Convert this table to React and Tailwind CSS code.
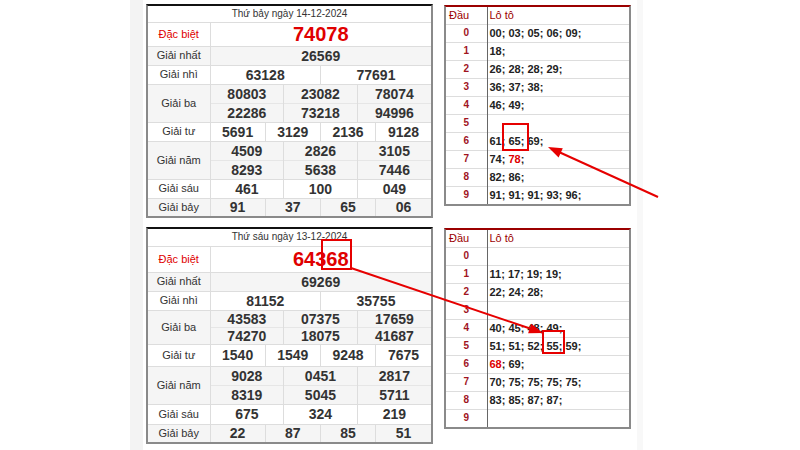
import React from "react";

// dữ liệu hai ngày quay
const days = [
  {
    date: "Thứ bảy ngày 14-12-2024",
    db: "74078",
    nhat: "26569",
    nhi: ["63128", "77691"],
    ba: [
      ["80803", "23082", "78074"],
      ["22286", "73218", "94996"],
    ],
    tu: ["5691", "3129", "2136", "9128"],
    nam: [
      ["4509", "2826", "3105"],
      ["8293", "5638", "7446"],
    ],
    sau: ["461", "100", "049"],
    bay: ["91", "37", "65", "06"],
    h: { head: 16, db: 24, nhat: 19, nhi: 19, ba: 19, tu: 19, nam: 19, sau: 19, bay: 18 },
    loto: [
      ["00", "03", "05", "06", "09"],
      ["18"],
      ["26", "28", "28", "29"],
      ["36", "37", "38"],
      ["46", "49"],
      [],
      ["61", "65", "69"],
      ["74", "78!"],
      ["82", "86"],
      ["91", "91", "91", "93", "96"],
    ],
  },
  {
    date: "Thứ sáu ngày 13-12-2024",
    db: "64368",
    nhat: "69269",
    nhi: ["81152", "35755"],
    ba: [
      ["43583", "07375", "17659"],
      ["74270", "18075", "41687"],
    ],
    tu: ["1540", "1549", "9248", "7675"],
    nam: [
      ["9028", "0451", "2817"],
      ["8319", "5045", "5711"],
    ],
    sau: ["675", "324", "219"],
    bay: ["22", "87", "85", "51"],
    h: { head: 17, db: 26, nhat: 19, nhi: 19, ba: 17, tu: 22, nam: 19, sau: 20, bay: 18 },
    loto: [
      [],
      ["11", "17", "19", "19"],
      ["22", "24", "28"],
      [],
      ["40", "45", "48", "49"],
      ["51", "51", "52", "55", "59"],
      ["68!", "69"],
      ["70", "75", "75", "75", "75"],
      ["83", "85", "87", "87"],
      [],
    ],
  },
];

const label = "p-0 leading-none text-[11px] text-[#333] text-center align-middle";
const num = "p-0 leading-none text-[14px] font-bold text-[#333] text-center align-middle border-l border-[#ddd]";
const span = { 2: 6, 3: 4, 4: 3 };

const Cells = ({ items }) =>
  items.map((n, i) => (
    <td key={i} colSpan={span[items.length]} className={num}>
      {n}
    </td>
  ));

const KetQua = ({ d }) => {
  const h = d.h;
  const gray = "bg-[#f5f5f5]";
  return (
    <div className="w-[287px] border-2 border-[#8a8a8a] border-t-[#111] bg-white">
      <table className="w-full table-fixed border-collapse">
        <colgroup>
          <col className="w-[62px]" />
          {Array.from({ length: 12 }).map((_, i) => (
            <col key={i} />
          ))}
        </colgroup>
        <tbody>
          <tr className="border-b border-[#ddd]" style={{ height: h.head }}>
            <td colSpan={13} className="p-0 leading-none text-[10px] text-[#333] text-center align-middle">
              {d.date}
            </td>
          </tr>
          <tr className="border-b border-[#ddd]" style={{ height: h.db }}>
            <td className="p-0 leading-none text-[11px] text-[#e00000] text-center align-middle">Đặc biệt</td>
            <td colSpan={12} className="p-0 text-[20px] font-bold text-[#e00000] text-center align-middle border-l border-[#ddd] leading-none">
              {d.db}
            </td>
          </tr>
          <tr className={`border-b border-[#ddd] ${gray}`} style={{ height: h.nhat }}>
            <td className={label}>Giải nhất</td>
            <td colSpan={12} className={num}>{d.nhat}</td>
          </tr>
          <tr className="border-b border-[#ddd]" style={{ height: h.nhi }}>
            <td className={label}>Giải nhì</td>
            <Cells items={d.nhi} />
          </tr>
          <tr className={`border-b border-[#e6e6e6] ${gray}`} style={{ height: h.ba }}>
            <td rowSpan={2} className={label}>Giải ba</td>
            <Cells items={d.ba[0]} />
          </tr>
          <tr className={`border-b border-[#ddd] ${gray}`} style={{ height: h.ba }}>
            <Cells items={d.ba[1]} />
          </tr>
          <tr className="border-b border-[#ddd]" style={{ height: h.tu }}>
            <td className={label}>Giải tư</td>
            <Cells items={d.tu} />
          </tr>
          <tr className={`border-b border-[#e6e6e6] ${gray}`} style={{ height: h.nam }}>
            <td rowSpan={2} className={label}>Giải năm</td>
            <Cells items={d.nam[0]} />
          </tr>
          <tr className={`border-b border-[#ddd] ${gray}`} style={{ height: h.nam }}>
            <Cells items={d.nam[1]} />
          </tr>
          <tr className="border-b border-[#ddd]" style={{ height: h.sau }}>
            <td className={label}>Giải sáu</td>
            <Cells items={d.sau} />
          </tr>
          <tr className={gray} style={{ height: h.bay }}>
            <td className={label}>Giải bảy</td>
            <Cells items={d.bay} />
          </tr>
        </tbody>
      </table>
    </div>
  );
};

const LoTo = ({ rows, head }) => (
  <div className="w-[187px] border-2 border-[#8a8a8a] border-t-[#9b0000] bg-white">
    <table className="w-full table-fixed border-collapse">
      <colgroup>
        <col className="w-[41px]" />
        <col />
      </colgroup>
      <tbody>
        <tr className="border-b border-[#ddd]" style={{ height: head }}>
          <td className="p-0 leading-none pl-[3px] text-[11px] text-[#9b0000] align-middle">Đầu</td>
          <td className="p-0 leading-none pl-[2px] text-[11px] text-[#9b0000] align-middle border-l border-[#666]">Lô tô</td>
        </tr>
        {rows.map((nums, i) => (
          <tr key={i} className={`h-[18px] ${i < 9 ? "border-b border-[#ddd]" : ""}`}>
            <td className="p-0 leading-none text-center text-[10px] font-bold text-[#a0141e] align-middle">{i}</td>
            <td className="p-0 leading-none pl-[2px] text-[11px] font-bold text-[#222] align-middle border-l border-[#666] whitespace-nowrap">
              {nums.map((n, j) => {
                const red = n.endsWith("!");
                return (
                  <React.Fragment key={j}>
                    <span className={red ? "text-[#e00000]" : ""}>{n.replace("!", "")}</span>
                    {j < nums.length - 1 ? "; " : ";"}
                  </React.Fragment>
                );
              })}
            </td>
          </tr>
        ))}
      </tbody>
    </table>
  </div>
);

export default function App() {
  return (
    <div className="relative w-[800px] h-[450px] overflow-hidden bg-white font-['Liberation_Sans',Arial,sans-serif]">
      <div className="ml-[130px] w-max h-full border-l-[13px] border-r-[6px] border-l-[#f3f3f3] border-r-[#f8f8f8] pl-[3px] pr-[6px] pt-[4px] flex flex-col">
        <div className="flex items-start gap-[11px] h-[223px]">
          <KetQua d={days[0]} />
          <div className="mt-[1px]">
            <LoTo rows={days[0].loto} head={17} />
          </div>
        </div>
        <div className="flex items-start gap-[11px]">
          <KetQua d={days[1]} />
          <div className="mt-[1px]">
            <LoTo rows={days[1].loto} head={17} />
          </div>
        </div>
      </div>

      {/* khung đỏ + mũi tên chú thích */}
      <svg className="absolute inset-0 pointer-events-none" width="800" height="450" viewBox="0 0 800 450">
        <g fill="none" stroke="#e60000" strokeWidth="2">
          <rect x="503" y="124" width="25" height="26" />
          <rect x="322" y="240" width="29" height="29" />
          <rect x="543" y="331" width="21" height="22" />
          <line x1="658" y1="197" x2="560" y2="152.5" />
          <line x1="351" y1="268" x2="530" y2="328.5" />
        </g>
        <g fill="#e60000">
          <polygon points="548,147 562.8,148.3 558.6,157.4" />
          <polygon points="543,333 528.1,333.2 531.3,323.8" />
        </g>
      </svg>
    </div>
  );
}
